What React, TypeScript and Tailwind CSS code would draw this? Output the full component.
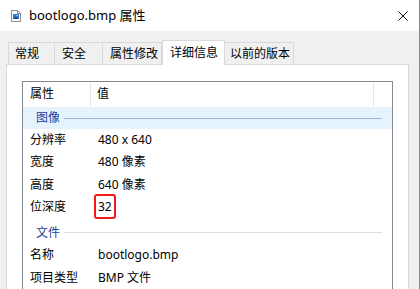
import React from "react";

type Row = { name: string; value: string; mark?: boolean };

const image: Row[] = [
  { name: "分辨率", value: "480 x 640" },
  { name: "宽度", value: "480 像素" },
  { name: "高度", value: "640 像素" },
  { name: "位深度", value: "32", mark: true },
];

const file: Row[] = [
  { name: "名称", value: "bootlogo.bmp" },
  { name: "项目类型", value: "BMP 文件" },
];

const tabs = [
  { label: "常规", w: "w-[47px] pl-[6px]" },
  { label: "安全", w: "w-[48px] pl-[7px]" },
  { label: "属性修改", w: "w-[59px] pl-[7px]" },
  { label: "详细信息", w: "w-[63px] pl-[7px]", active: true },
  { label: "以前的版本", w: "w-[69px] pl-[5px]" },
];

function FileIcon() {
  return (
    <svg width="10" height="12" viewBox="0 0 10 12">
      <path d="M0.5 0.5 H6.5 L9.5 3.5 V11.5 H0.5 Z" fill="#fff" stroke="#8c8c8c" />
      <path d="M6.5 0.5 V3.5 H9.5" fill="none" stroke="#8c8c8c" />
      <rect x="2" y="4" width="6" height="5" fill="#2f7fd6" />
      <path d="M2 9 L4.5 6 L8 9 Z" fill="#1b4f9c" />
      <rect x="5.5" y="4.8" width="1.3" height="1.3" fill="#bfe0ff" />
    </svg>
  );
}

function Group({ title, active }: { title: string; active?: boolean }) {
  return (
    <div className={`flex items-center pl-[13px] pr-[10px] ${active ? "h-[22px] bg-[#e5f3ff]" : "h-[25px] pt-[4px]"}`}>
      <span className="text-[#1e3f9a]">{title}</span>
      <div className={`ml-[4px] h-px flex-1 ${active ? "bg-[#9db3d9]" : "bg-[#dcdfea]"}`} />
    </div>
  );
}

function Item({ row, tall }: { row: Row; tall?: boolean }) {
  return (
    <div className={`flex items-center ${tall ? "h-[23px]" : "h-[22px]"}`}>
      <div className="w-[75px] pl-[7px]">{row.name}</div>
      <div className="flex-1">
        <span className="relative inline-block">
          {row.value}
          {row.mark && (
            <span className="absolute -left-[4px] -right-[4px] -top-[4px] -bottom-[3px] rounded-[3px] border-2 border-[#f21a1a]" />
          )}
        </span>
      </div>
    </div>
  );
}

export default function App() {
  return (
    <div
      className="w-[420px] h-[289px] overflow-hidden flex flex-col bg-[#f0f0f0] text-[12px] text-black border-r border-[#8a8a8a]"
      style={{ fontFamily: '"Noto Sans", "Noto Sans CJK SC", sans-serif' }}
    >
      {/* 标题栏 */}
      <div className="h-[31px] bg-white flex items-center pl-[11px] pr-[11px] shrink-0">
        <FileIcon />
        <span className="ml-[8px] text-[13px] leading-none">bootlogo.bmp 属性</span>
        <svg className="ml-auto" width="10" height="10" viewBox="0 0 10 10">
          <path d="M0.5 0.5 L9.5 9.5 M9.5 0.5 L0.5 9.5" stroke="#111" strokeWidth="1" />
        </svg>
      </div>

      {/* 选项卡 */}
      <div className="flex items-end pl-[8px] pt-[9px] shrink-0">
        {tabs.map((t, i) =>
          t.active ? (
            <div key={t.label} className={`${t.w} h-[25px] -mb-px flex items-center bg-white border border-b-0 border-[#d9d9d9] relative z-10`}>
              {t.label}
            </div>
          ) : (
            <div key={t.label} className={`${t.w} h-[22px] flex items-center border-t border-r border-[#d9d9d9] ${i === 0 ? "border-l" : ""}`}>
              {t.label}
            </div>
          )
        )}
      </div>

      {/* 面板 */}
      <div className="ml-[6px] mr-[10px] flex-1 bg-white border border-[#d9d9d9] pt-[16px] px-[15px]">
        <div className="border border-[#828790] h-[260px]">
          <div className="flex h-[24px] items-center">
            <div className="w-[68px] pl-[7px] h-full flex items-center border-r border-[#e5e5e5]">属性</div>
            <div className="flex-1 pl-[6px] h-full flex items-center border-r border-[#e5e5e5]">值</div>
            <div className="w-[18px]" />
          </div>
          <div className="h-px" />
          <Group title="图像" active />
          {image.map((r, i) => (
            <Item key={r.name} row={r} tall={i === 2} />
          ))}
          <Group title="文件" />
          {file.map((r) => (
            <Item key={r.name} row={r} tall />
          ))}
        </div>
      </div>
    </div>
  );
}
